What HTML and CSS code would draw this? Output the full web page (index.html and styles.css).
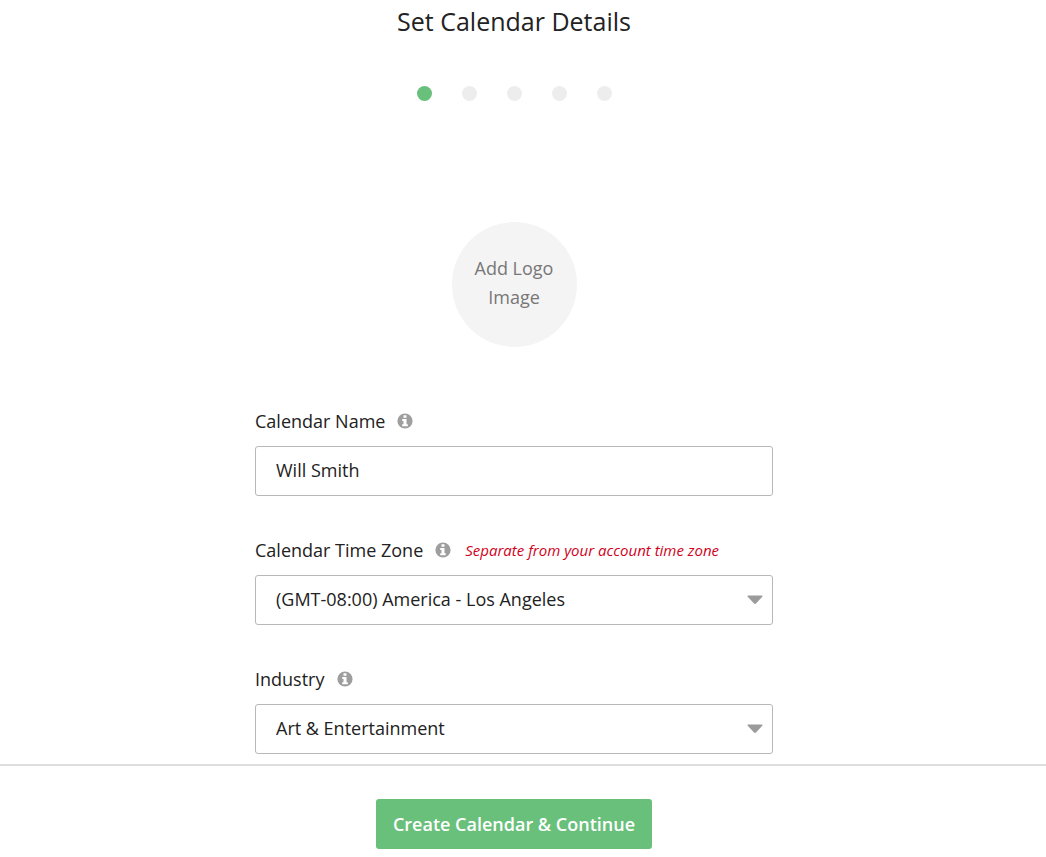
FILE: index.html
```html
<!DOCTYPE html>
<html lang="en">
<head>
    <meta charset="UTF-8">
    <meta name="viewport" content="width=device-width, initial-scale=1.0">
    <title>Set Calendar Details</title>
    <link rel="stylesheet" href="styles.css">
</head>
<body>
    <svg class="icon-defs" aria-hidden="true">
        <symbol id="icon-info" viewBox="0 0 16 16">
            <circle cx="8" cy="8" r="7.6" fill="#9e9e9e"/>
            <path d="M6.5 2.2h3v2.5h-3zM5.2 6h4.3v5.2h1.3v2.1H5.2v-2.1h1.3V8.1H5.2z" fill="#fff"/>
        </symbol>
        <symbol id="icon-arrow" viewBox="0 0 16 10">
            <path d="M1 .5h14q1 .2.3 1.2L9 8.6q-1 .9-2 0L.7 1.7Q0 .7 1 .5z" fill="#9b9b9b"/>
        </symbol>
    </svg>

    <main class="container">
        <h1>Set Calendar Details</h1>

        <ol class="steps" aria-label="Progress">
            <li class="step active"></li>
            <li class="step"></li>
            <li class="step"></li>
            <li class="step"></li>
            <li class="step"></li>
        </ol>

        <button type="button" class="logo-upload">Add Logo Image</button>

        <form id="calendar-form" class="form">
            <div class="field">
                <div class="field-header">
                    <label for="calendar-name">Calendar Name</label>
                    <svg class="info"><use href="#icon-info"/></svg>
                </div>
                <input type="text" id="calendar-name" name="calendar-name" class="control" value="Will Smith">
            </div>

            <div class="field">
                <div class="field-header">
                    <label for="time-zone">Calendar Time Zone</label>
                    <svg class="info"><use href="#icon-info"/></svg>
                    <span class="note">Separate from your account time zone</span>
                </div>
                <div class="select-wrap">
                    <select id="time-zone" name="time-zone" class="control">
                        <option>(GMT-08:00) America - Los Angeles</option>
                    </select>
                    <svg class="arrow"><use href="#icon-arrow"/></svg>
                </div>
            </div>

            <div class="field">
                <div class="field-header">
                    <label for="industry">Industry</label>
                    <svg class="info"><use href="#icon-info"/></svg>
                </div>
                <div class="select-wrap">
                    <select id="industry" name="industry" class="control">
                        <option>Art &amp; Entertainment</option>
                    </select>
                    <svg class="arrow"><use href="#icon-arrow"/></svg>
                </div>
            </div>
        </form>
    </main>

    <footer class="footer">
        <button type="submit" form="calendar-form" class="submit">Create Calendar &amp; Continue</button>
    </footer>
</body>
</html>
```
FILE: styles.css
```css
* {
    box-sizing: border-box;
}

body {
    margin: 0;
    background-color: #fff;
    color: #222;
    font-family: "Open Sans", sans-serif;
    font-size: 18px;
    line-height: 26px;
}

button,
input,
select {
    font: inherit;
    color: inherit;
}

.icon-defs {
    display: none;
}

.container {
    display: flex;
    flex-direction: column;
    align-items: center;
    padding: 3px 18px 10px 0;
}

h1 {
    margin: 0;
    font-size: 25px;
    line-height: 36px;
    font-weight: 400;
}

.steps {
    display: flex;
    gap: 30px;
    margin: 47px 0 0;
    padding: 0;
    list-style: none;
}

.step {
    width: 15px;
    height: 15px;
    border-radius: 50%;
    background-color: #ededed;
}

.step.active {
    background-color: #68c07b;
}

.logo-upload {
    width: 125px;
    height: 125px;
    margin: 121px 0 61px;
    padding: 0 20px 4px;
    border: none;
    border-radius: 50%;
    background-color: #f4f4f4;
    color: #777;
    line-height: 29px;
    cursor: pointer;
}

.form {
    display: flex;
    flex-direction: column;
    gap: 41px;
    width: 100%;
    max-width: 518px;
}

.field-header {
    display: flex;
    align-items: center;
    margin-bottom: 12px;
}

.info {
    width: 16px;
    height: 16px;
    margin: 0 14px 0 12px;
}

.note {
    color: #d0021b;
    font-size: 15px;
    font-style: italic;
}

.control {
    display: block;
    width: 100%;
    height: 50px;
    padding: 0 20px 2px;
    border: 1px solid #b8b8b8;
    border-radius: 3px;
    background-color: #fff;
    appearance: none;
}

.select-wrap {
    position: relative;
}

.arrow {
    position: absolute;
    top: 20px;
    right: 10px;
    width: 16px;
    height: 10px;
    pointer-events: none;
}

.footer {
    display: flex;
    justify-content: center;
    padding: 33px 18px 8px 0;
    border-top: 2px solid #dedede;
}

.submit {
    height: 50px;
    padding: 0 17px;
    border: none;
    border-radius: 3px;
    background-color: #68c07b;
    color: #fff;
    font-weight: 600;
    cursor: pointer;
}

.submit:hover {
    background-color: #5bb26e;
}
```
